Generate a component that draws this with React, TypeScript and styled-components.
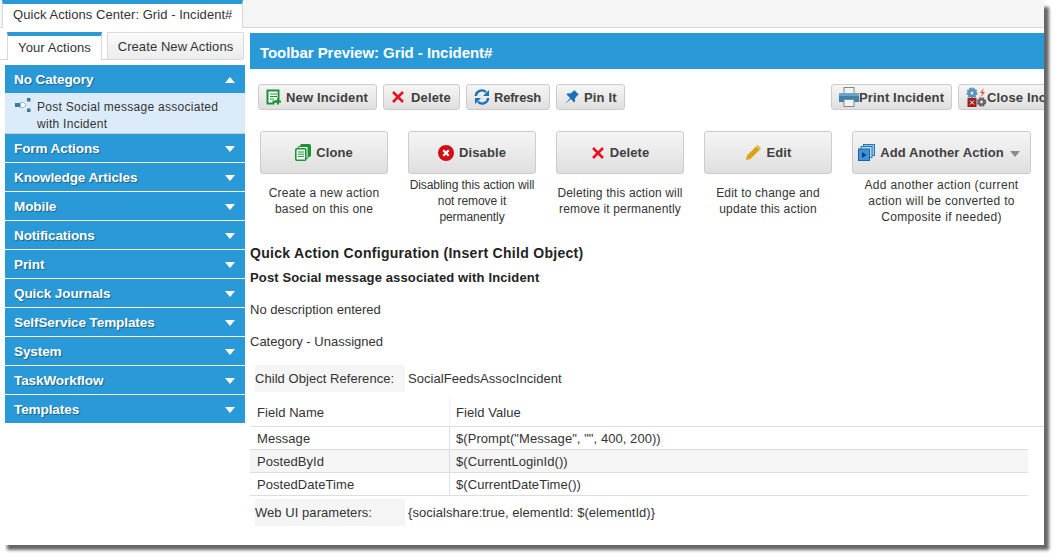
import React from "react";
import styled, { createGlobalStyle } from "styled-components";

const Global = createGlobalStyle`
  html, body { margin: 0; padding: 0; background: #fff; }
  body { min-height: 560px; font-family: "Liberation Sans", Arial, sans-serif; font-size: 13px; color: #333; }
`;

const Frame = styled.div`
  width: 1044px;
  height: 545px;
  background: #fff;
  overflow: hidden;
  box-shadow: 6px 6px 3px -1px #666;
`;

const TopStrip = styled.div`
  height: 27px;
  background: #f5f5f5;
  border-bottom: 1px solid #d8d8d8;
  padding-left: 2px;
  display: flex;
  align-items: flex-end;
`;

const TopTab = styled.div`
  width: 241px;
  height: 28px;
  margin-bottom: -1px;
  box-sizing: border-box;
  background: #fff;
  border-top: 4px solid #2a99d8;
  border-right: 1px solid #d8d8d8;
  border-left: 1px solid #d8d8d8;
  padding: 3px 0 0 10px;
  font-size: 13px;
  letter-spacing: 0.05px;
  line-height: 16px;
  color: #333;
`;

const Body = styled.div`
  display: flex;
  padding-top: 5px;
`;

const Sidebar = styled.aside`
  width: 250px;
  flex: 0 0 250px;
`;

const SideTabs = styled.div`
  height: 27px;
  width: 243px;
  display: flex;
  align-items: flex-end;
  padding-left: 7px;
  box-sizing: border-box;
  gap: 5px;
  border-bottom: 1px solid #d8d8d8;
  margin-bottom: 5px;
`;

const SideTab = styled.div<{ $active?: boolean }>`
  flex: 0 0 auto;
  box-sizing: border-box;
  height: ${(p) => (p.$active ? "28px" : "27px")};
  width: ${(p) => (p.$active ? "95px" : "137px")};
  margin-bottom: ${(p) => (p.$active ? "-1px" : "0")};
  border-top: ${(p) => (p.$active ? "4px solid #2a99d8" : "1px solid #dcdcdc")};
  border-left: 1px solid #d8d8d8;
  border-right: 1px solid #d8d8d8;
  background: ${(p) => (p.$active ? "#fff" : "linear-gradient(#fafafa,#ececec)")};
  text-align: center;
  font-size: 13px;
  letter-spacing: 0.08px;
  line-height: 16px;
  padding-top: ${(p) => (p.$active ? "4px" : "6px")};
  color: #333;
`;

const Accordion = styled.div`
  margin-left: 5px;
  width: 240px;
`;

const Header = styled.div<{ $open?: boolean }>`
  height: 28px;
  margin-bottom: ${(p) => (p.$open ? "0" : "1px")};
  background: #2a99d8;
  color: #fff;
  font-weight: bold;
  font-size: 13.5px;
  letter-spacing: -0.08px;
  line-height: 27px;
  padding: 0 10px 0 9px;
  display: flex;
  justify-content: space-between;
  align-items: center;
  text-shadow: 1px 1px 1px rgba(0, 0, 0, 0.35);
`;

const Caret = styled.span<{ $up?: boolean }>`
  width: 0;
  height: 0;
  margin-top: 1px;
  border-left: 5px solid transparent;
  border-right: 5px solid transparent;
  ${(p) => (p.$up ? "border-bottom: 6px solid #fff;" : "border-top: 6px solid #fff;")}
`;

const Panel = styled.div`
  height: 35px;
  background: #dcebfa;
  border-bottom: 1px solid #ccc;
  display: flex;
  padding: 5px 0 0 10px;
  font-size: 12px;
  line-height: 17px;
  color: #333;
`;

const PanelIcon = styled.span`
  flex: 0 0 22px;
`;

const PanelText = styled.div`
  width: 200px;
  padding-top: 1px;
  letter-spacing: 0.28px;
`;

const Main = styled.main`
  flex: 1;
  min-width: 0;
`;

const TitleBar = styled.div`
  height: 36px;
  background: #2a99d8;
  color: #fff;
  font-weight: bold;
  font-size: 15px;
  letter-spacing: -0.05px;
  line-height: 40px;
  padding-left: 10px;
  overflow: hidden;
`;

const Toolbar = styled.div`
  display: flex;
  padding: 15px 0 0 8px;
  height: 26px;
`;

const ToolGroup = styled.div<{ $w?: number }>`
  display: flex;
  gap: 6px;
  flex: 0 0 ${(p) => (p.$w ? `${p.$w}px` : "auto")};
`;

const ToolButton = styled.div<{ $w: number; $gap?: number; $ls?: number }>`
  flex: 0 0 ${(p) => p.$w}px;
  width: ${(p) => p.$w}px;
  box-sizing: border-box;
  height: 26px;
  border: 1px solid #ccc;
  border-radius: 3px;
  background: linear-gradient(#f5f5f5, #dfdfdf);
  display: flex;
  align-items: center;
  gap: ${(p) => p.$gap ?? 4}px;
  padding-left: 7px;
  font-weight: bold;
  font-size: 13px;
  letter-spacing: ${(p) => p.$ls ?? 0.15}px;
  color: #3f3f3f;
  white-space: nowrap;
`;

const Actions = styled.div`
  display: flex;
  padding: 21px 0 0 10px;
  gap: 20px;
`;

const ActionCol = styled.div<{ $w: number }>`
  flex: 0 0 ${(p) => p.$w}px;
  width: ${(p) => p.$w}px;
  display: flex;
  flex-direction: column;
`;

const BigButton = styled.div`
  height: 43px;
  box-sizing: border-box;
  border: 1px solid #ccc;
  border-radius: 3px;
  background: linear-gradient(#f5f5f5, #dfdfdf);
  display: flex;
  align-items: center;
  justify-content: center;
  gap: 5px;
  font-weight: bold;
  font-size: 13px;
  letter-spacing: 0.1px;
  color: #3f3f3f;
`;

const Dim = styled.span`
  width: 0;
  height: 0;
  margin: 2px 5px 0 1px;
  border-left: 5px solid transparent;
  border-right: 5px solid transparent;
  border-top: 6px solid #8c8c8c;
`;

const Caption = styled.div<{ $ls: number }>`
  height: 48px;
  margin-top: 3px;
  display: flex;
  align-items: center;
  justify-content: center;
  text-align: center;
  white-space: nowrap;
  font-size: 12px;
  letter-spacing: ${(p) => p.$ls}px;
  line-height: 16px;
  color: #333;
`;

const Section = styled.div`
  padding-top: 16px;
`;

const Heading = styled.div`
  font-weight: bold;
  font-size: 14px;
  letter-spacing: 0.3px;
  line-height: 24px;
  color: #222;
`;

const Sub = styled.div`
  font-weight: bold;
  font-size: 13px;
  letter-spacing: 0.14px;
  line-height: 25px;
  color: #222;
`;

const Plain = styled.div<{ $top: number }>`
  font-size: 13px;
  line-height: 16px;
  margin-top: ${(p) => p.$top}px;
`;

const KeyRow = styled.div<{ $top: number }>`
  display: flex;
  height: 27px;
  margin: ${(p) => p.$top}px 0 0 5px;
  align-items: center;
  font-size: 13px;
  letter-spacing: 0.05px;
`;

const Key = styled.div`
  width: 150px;
  height: 27px;
  line-height: 27px;
  background: #f5f5f5;
  color: #333;
  margin-right: 3px;
`;

const Table = styled.div`
  width: 778px;
  margin-top: 6px;
`;

const TRow = styled.div<{ $alt?: boolean; $head?: boolean }>`
  display: grid;
  grid-template-columns: 199px 1fr;
  height: ${(p) => (p.$head ? "28px" : "22px")};
  background: ${(p) => (p.$alt ? "#f5f5f5" : "transparent")};
  border-bottom: 1px solid #ddd;
  ${(p) => p.$head && "margin-right: -16px;"}
  font-size: 13px;
  letter-spacing: 0.06px;
`;

const TCell = styled.div<{ $second?: boolean; $head?: boolean }>`
  padding-left: ${(p) => (p.$second ? "6px" : "7px")};
  border-left: ${(p) => (p.$second ? `1px solid ${p.$head ? "#f2f2f2" : "#ddd"}` : "none")};
  line-height: ${(p) => (p.$head ? "29px" : "24px")};
  height: ${(p) => (p.$head ? "28px" : "22px")};
`;

const IconSvg = styled.svg`
  flex: 0 0 auto;
  display: block;
`;

const NewIcon = () => (
  <IconSvg width="16" height="16" viewBox="0 0 16 16">
    <path d="M1.500 1.500h11v11h-5v2h-6z" fill="#fff" stroke="#1a9433" strokeWidth="2" />
    <path d="M4 5h7M4 7.500h7M4 10h4" stroke="#1a9433" strokeWidth="1" />
    <path d="M12 9.500v6M9 12.500h6" stroke="#1a9433" strokeWidth="2" />
  </IconSvg>
);

const XIcon = () => (
  <IconSvg width="14" height="14" viewBox="0 0 14 14">
    <path d="M2 2l10 10M12 2L2 12" stroke="#e5141d" strokeWidth="2.600" />
  </IconSvg>
);

const RefreshIcon = () => (
  <IconSvg width="16" height="16" viewBox="0 0 16 16">
    <path d="M1.800 7A6 6 0 0 1 12 3.200" fill="none" stroke="#1a73b8" strokeWidth="2.400" />
    <path d="M15 1v6H9z" fill="#1a73b8" />
    <path d="M14.200 9A6 6 0 0 1 4 12.800" fill="none" stroke="#1a73b8" strokeWidth="2.400" />
    <path d="M1 15V9h6z" fill="#1a73b8" />
  </IconSvg>
);

const PinIcon = () => (
  <IconSvg width="16" height="16" viewBox="0 0 15 15">
    <path d="M9.500 1l4.500 4.500-1.300.4-2.500 3 .2 2.700-1 1L6.500 9.300 1 14l4.700-5.500L2.400 5.100l1-1 2.700.2 3-2.500z" fill="#1e6fb8" />
  </IconSvg>
);

const PrintIcon = () => (
  <IconSvg width="20" height="20" viewBox="0 0 20 20">
    <rect x="5" y="0.500" width="10" height="6" fill="#f2f2f2" stroke="#888" />
    <path d="M0 6h20v9H15v-3H5v3H0z" fill="#3d82ad" />
    <rect x="0" y="6" width="20" height="3" fill="#6aa4c8" />
    <rect x="5" y="12.500" width="10" height="7" fill="#f2f2f2" stroke="#888" />
  </IconSvg>
);

const CloseIcon = () => (
  <IconSvg width="21" height="21" viewBox="0 0 21 21">
    <circle cx="6" cy="6" r="4.500" fill="#5d93bb" stroke="#5d93bb" strokeDasharray="2 1" strokeWidth="2" />
    <circle cx="6" cy="6" r="1.500" fill="#e8e8e8" />
    <circle cx="15.500" cy="15" r="3.800" fill="#666" stroke="#666" strokeDasharray="2 1" strokeWidth="2" />
    <circle cx="15.500" cy="15" r="1.400" fill="#e8e8e8" />
    <path d="M18 1l-4 5h2.500L14 11l5-6h-2.500z" fill="#e5502a" />
    <rect x="1.500" y="11" width="9" height="9" fill="#9c2020" />
    <path d="M4 13.500l4 4M8 13.500l-4 4" stroke="#fff" />
  </IconSvg>
);

const CloneIcon = () => (
  <IconSvg width="16" height="17" viewBox="0 0 16 17">
    <rect x="5.500" y="0.500" width="10" height="12" rx="1" fill="#1a9433" stroke="#1a9433" />
    <rect x="3" y="2.500" width="10" height="12" rx="1" fill="#fff" stroke="#1a9433" />
    <rect x="0.800" y="4.800" width="10" height="11.400" rx="1" fill="#fff" stroke="#1a9433" strokeWidth="1.600" />
    <path d="M3 8h6M3 10.200h6M3 12.400h6" stroke="#1a9433" />
  </IconSvg>
);

const DisableIcon = () => (
  <IconSvg width="16" height="16" viewBox="0 0 16 16">
    <circle cx="8" cy="8" r="8" fill="#d40d12" />
    <path d="M5.300 5.300l5.400 5.400M10.700 5.300l-5.400 5.400" stroke="#fff" strokeWidth="2.200" />
  </IconSvg>
);

const PencilIcon = () => (
  <IconSvg width="17" height="17" viewBox="0 0 17 17">
    <path d="M12.500 1l3.500 3.500L5.500 15 1 16l1-4.500z" fill="#dca312" />
    <path d="M11.500 2l3.500 3.500" stroke="#f2f0e0" strokeWidth="0.800" />
  </IconSvg>
);

const StackIcon = () => (
  <IconSvg width="17" height="17" viewBox="0 0 17 17">
    <rect x="5.500" y="0.500" width="11" height="11" fill="#8ec2ea" stroke="#2a76bb" />
    <rect x="3" y="2.500" width="11" height="11" fill="#b9dbf3" stroke="#2a76bb" />
    <rect x="0.500" y="5" width="11" height="11.500" fill="#3f94d6" stroke="#1e62a8" />
    <path d="M4 8l4.500 3-4.500 3z" fill="#0f3f7a" />
  </IconSvg>
);

const NodeIcon = () => (
  <IconSvg width="16" height="14" viewBox="0 0 16 14">
    <rect x="0" y="5" width="5" height="4" fill="#3c7d95" />
    <path d="M5.500 4.500h3L11 7 8.500 9.500h-3z" fill="#fff" stroke="#9fb4c0" />
    <rect x="12" y="0" width="3.500" height="3.500" fill="#3c7d95" />
    <rect x="12" y="10.500" width="3.500" height="3.500" fill="#3c7d95" />
  </IconSvg>
);

const categories = [
  "Form Actions",
  "Knowledge Articles",
  "Mobile",
  "Notifications",
  "Print",
  "Quick Journals",
  "SelfService Templates",
  "System",
  "TaskWorkflow",
  "Templates",
];

const actions = [
  { w: 128, ls: 0.2, label: "Clone", icon: <CloneIcon />, lines: ["Create a new action", "based on this one"] },
  { w: 128, ls: -0.08, label: "Disable", icon: <DisableIcon />, lines: ["Disabling this action will", "not remove it", "permanently"] },
  { w: 128, ls: 0.15, label: "Delete", icon: <XIcon />, lines: ["Deleting this action will", "remove it permanently"] },
  { w: 128, ls: 0.2, label: "Edit", icon: <PencilIcon />, lines: ["Edit to change and", "update this action"] },
  { w: 179, ls: 0.32, label: "Add Another Action", icon: <StackIcon />, lines: ["Add another action (current", "action will be converted to", "Composite if needed)"], menu: true },
];

const fields = [
  ["Message", '$(Prompt("Message", "", 400, 200))'],
  ["PostedById", "$(CurrentLoginId())"],
  ["PostedDateTime", "$(CurrentDateTime())"],
];

export default function App() {
  return (
    <>
      <Global />
      <Frame>
        <TopStrip>
          <TopTab>Quick Actions Center: Grid - Incident#</TopTab>
        </TopStrip>
        <Body>
          <Sidebar>
            <SideTabs>
              <SideTab $active>Your Actions</SideTab>
              <SideTab>Create New Actions</SideTab>
            </SideTabs>
            <Accordion>
              <Header $open>
                No Category
                <Caret $up />
              </Header>
              <Panel>
                <PanelIcon>
                  <NodeIcon />
                </PanelIcon>
                <PanelText>Post Social message associated with Incident</PanelText>
              </Panel>
              {categories.map((c) => (
                <Header key={c}>
                  {c}
                  <Caret />
                </Header>
              ))}
            </Accordion>
          </Sidebar>
          <Main>
            <TitleBar>Toolbar Preview: Grid - Incident#</TitleBar>
            <Toolbar>
              <ToolGroup $w={573}>
                <ToolButton $w={119}><NewIcon />New Incident</ToolButton>
                <ToolButton $w={77} $gap={6}><XIcon />Delete</ToolButton>
                <ToolButton $w={84} $ls={-0.2}><RefreshIcon />Refresh</ToolButton>
                <ToolButton $w={69}><PinIcon />Pin It</ToolButton>
              </ToolGroup>
              <ToolGroup>
                <ToolButton $w={121} $gap={0}><PrintIcon />Print Incident</ToolButton>
                <ToolButton $w={130} $gap={0}><CloseIcon />Close Incident</ToolButton>
              </ToolGroup>
            </Toolbar>
            <Actions>
              {actions.map((a) => (
                <ActionCol key={a.label} $w={a.w}>
                  <BigButton>
                    {a.icon}
                    {a.label}
                    {a.menu && <Dim />}
                  </BigButton>
                  <Caption $ls={a.ls}>
                    <div>
                      {a.lines.map((l) => (
                        <div key={l}>{l}</div>
                      ))}
                    </div>
                  </Caption>
                </ActionCol>
              ))}
            </Actions>
            <Section>
              <Heading>Quick Action Configuration (Insert Child Object)</Heading>
              <Sub>Post Social message associated with Incident</Sub>
              <Plain $top={12}>No description entered</Plain>
              <Plain $top={16}>Category - Unassigned</Plain>
              <KeyRow $top={15}>
                <Key>Child Object Reference:</Key>
                SocialFeedsAssocIncident
              </KeyRow>
              <Table>
                <TRow $head>
                  <TCell $head>Field Name</TCell>
                  <TCell $second $head>Field Value</TCell>
                </TRow>
                {fields.map(([k, v], i) => (
                  <TRow key={k} $alt={i === 1}>
                    <TCell>{k}</TCell>
                    <TCell $second>{v}</TCell>
                  </TRow>
                ))}
              </Table>
              <KeyRow $top={3}>
                <Key>Web UI parameters:</Key>
                {"{socialshare:true, elementId: $(elementId)}"}
              </KeyRow>
            </Section>
          </Main>
        </Body>
      </Frame>
    </>
  );
}
